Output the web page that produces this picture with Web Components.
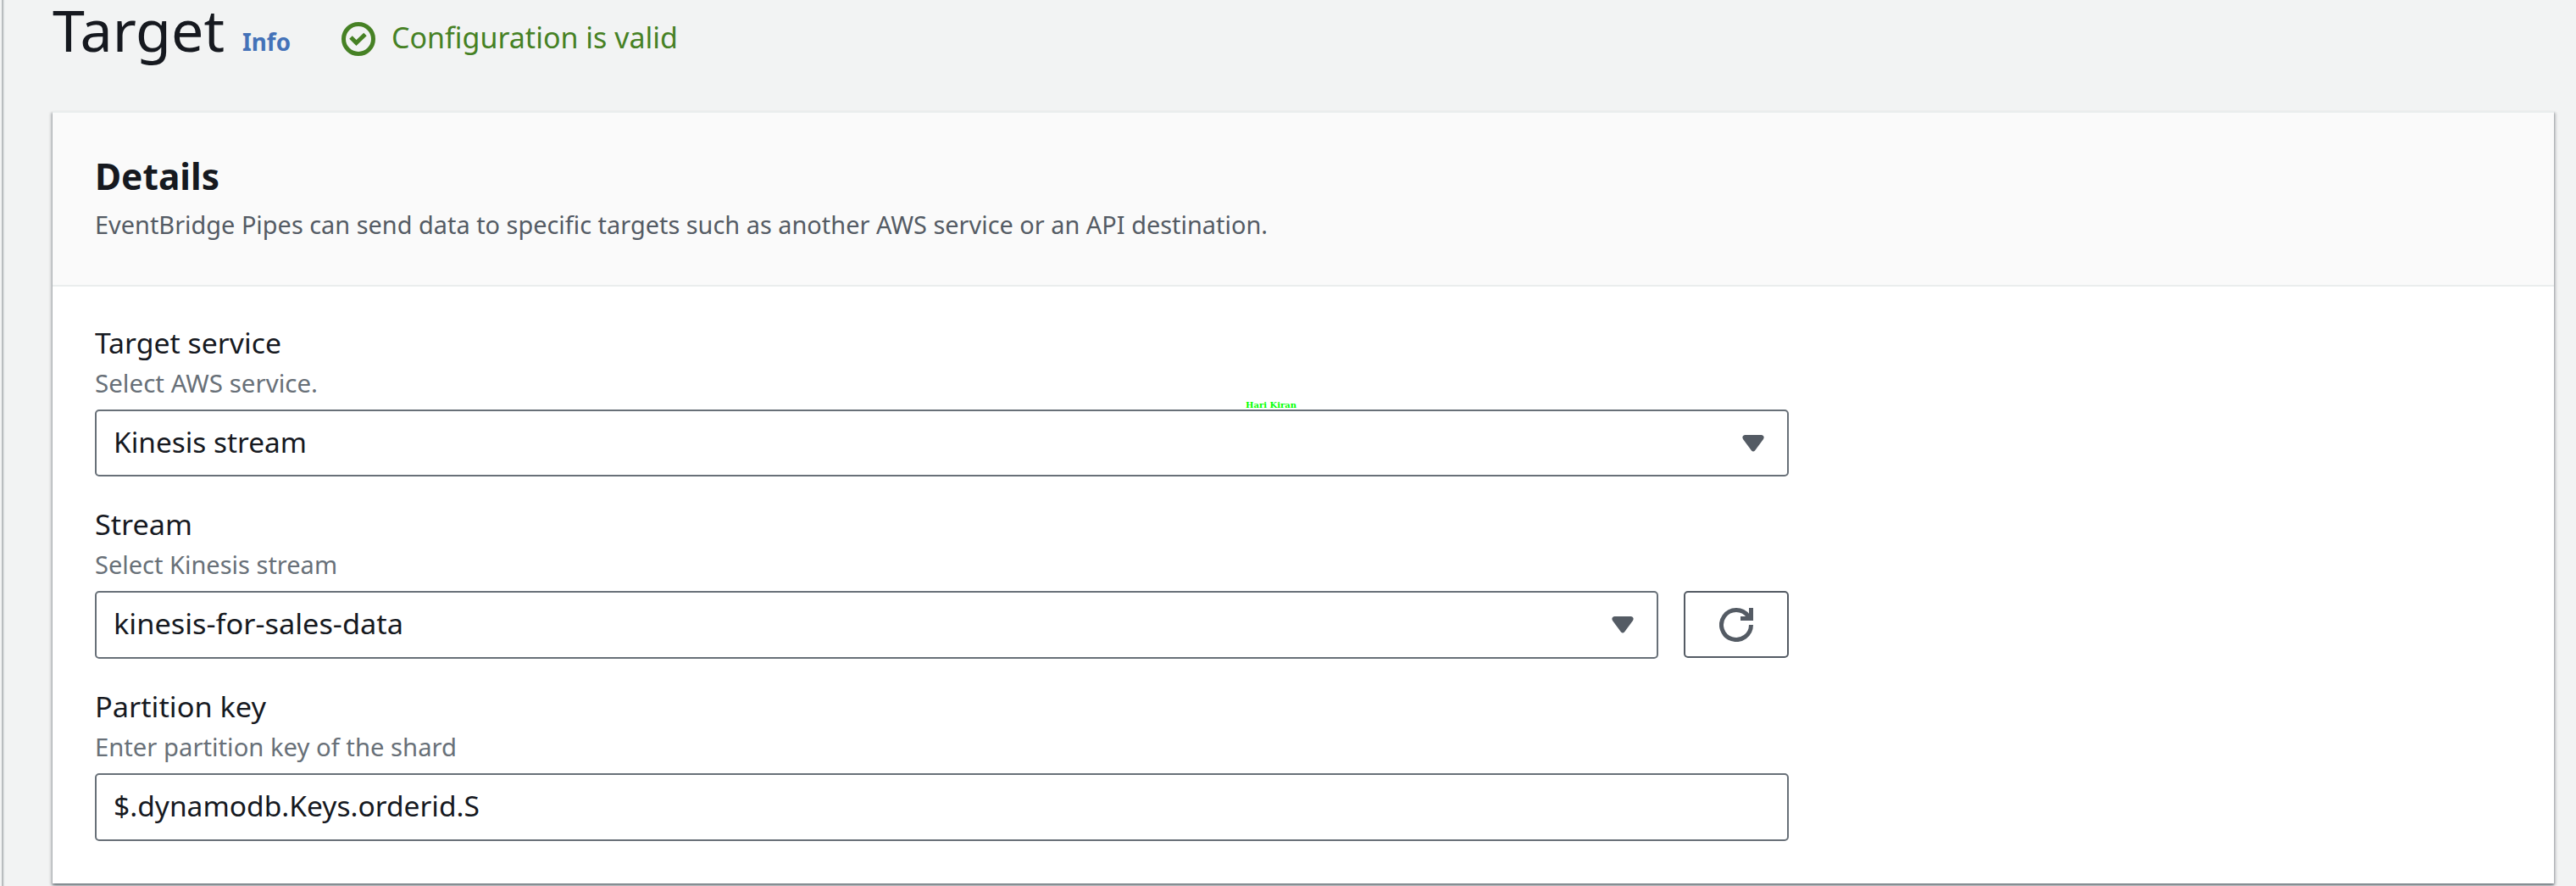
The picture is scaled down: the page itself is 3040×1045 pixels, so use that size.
<!DOCTYPE html>
<html lang="en">
<head>
<meta charset="utf-8">
<title>Target</title>
<style>
html,body{margin:0;height:1045px;overflow:hidden;background:#f2f3f3}
body{font-family:"Noto Sans","Open Sans",sans-serif;color:#16191f}
</style>
</head>
<body>
<pipe-page></pipe-page>
<script>
class FitText extends HTMLElement{
  connectedCallback(){
    const s=this.attachShadow({mode:'open'});
    s.innerHTML=`<style>:host{display:block;white-space:nowrap;width:${this.getAttribute('w')}px}
    span{display:inline-block;transform-origin:0 0}</style><span>${this.getAttribute('text')}</span>`;
    const span=s.querySelector('span');
    span.style.transform=`scaleX(${this.getAttribute('w')/span.getBoundingClientRect().width})`;
  }
}
class StatusIcon extends HTMLElement{
  connectedCallback(){
    this.attachShadow({mode:'open'}).innerHTML=`<style>:host,svg{display:block;width:40px;height:40px}</style>
    <svg viewBox="0 0 40 40" fill="none" stroke="#468124" stroke-width="5"><circle cx="20" cy="20" r="17.5"/><path d="M11 18l6.500 6.500L28 14.500"/></svg>`;
  }
}
class PageHeading extends HTMLElement{
  connectedCallback(){
    this.attachShadow({mode:'open'}).innerHTML=`<style>
    :host{display:flex;height:131px;padding-left:62px;box-sizing:border-box;align-items:flex-start}
    .t{font-size:68px;line-height:72px;margin-top:-1px}
    .i{font-size:29px;line-height:40px;font-weight:700;color:#4472b8;margin:29px 0 0 21px}
    status-icon{margin:26px 0 0 60px}
    .s{font-size:34px;line-height:40px;color:#468124;margin:24px 0 0 19px}</style>
    <fit-text class="t" w="203" text="Target"></fit-text><fit-text class="i" w="57" text="Info"></fit-text>
    <status-icon></status-icon><fit-text class="s" w="338" text="Configuration is valid"></fit-text>`;
  }
}
class DetailsCard extends HTMLElement{
  connectedCallback(){
    this.attachShadow({mode:'open'}).innerHTML=`<style>
    :host{display:block;width:2952px;height:911px;margin-left:62px;background:#fff;box-sizing:border-box;
      border-top:2px solid #eaeded;box-shadow:0 2px 2px 0 rgba(0,28,36,.3),2px 2px 3px 0 rgba(0,7,22,.22),-2px 2px 3px 0 rgba(0,7,22,.22)}
    header{height:205px;box-sizing:border-box;background:#fafafa;border-bottom:2px solid #eaeded;padding:45px 0 0 50px}
    .h{font-size:43px;line-height:60px;font-weight:700}
    .d{font-size:29px;line-height:40px;color:#545b64;margin-top:7px}
    main{display:block;padding:43px 0 0 50px}</style>
    <header><fit-text class="h" w="147" text="Details"></fit-text>
    <fit-text class="d" w="1384" text="EventBridge Pipes can send data to specific targets such as another AWS service or an API destination."></fit-text></header>
    <main><slot></slot></main>`;
  }
}
class FormField extends HTMLElement{
  connectedCallback(){
    const a=n=>this.getAttribute(n);
    this.attachShadow({mode:'open'}).innerHTML=`<style>
    :host{display:block;width:1999px;height:${a('height')}px}
    .l{font-size:33px;line-height:48px}
    .h{font-size:29px;line-height:40px;color:#687078;margin-top:3px}
    .r{display:flex;gap:30px;margin-top:11px}</style>
    <fit-text class="l" w="${a('lw')}" text="${a('label')}"></fit-text>
    <fit-text class="h" w="${a('hw')}" text="${a('hint')}"></fit-text><div class="r"><slot></slot></div>`;
  }
}
class ValueBox extends HTMLElement{
  connectedCallback(){
    const arrow=this.hasAttribute('select')?'<svg width="26" height="20" viewBox="0 0 26 20"><path d="M3 0h20q4 1 2 5L15 18.5q-2 2-4 0L1 5Q-1 1 3 0z" fill="#545b64"/></svg>':'';
    this.attachShadow({mode:'open'}).innerHTML=`<style>
    :host{flex:1;display:flex;position:relative;justify-content:space-between;align-items:center;height:${this.getAttribute('height')||80}px;box-sizing:border-box;border:2px solid #687078;border-radius:5px;padding:0 27px 0 20px;font-size:33px;line-height:48px}
    fit-text{margin-top:-2px}</style>
    <fit-text w="${this.getAttribute('w')}" text="${this.getAttribute('value')}"></fit-text>${arrow}<slot></slot>`;
  }
}
class RefreshButton extends HTMLElement{
  connectedCallback(){
    this.attachShadow({mode:'open'}).innerHTML=`<style>
    :host{display:flex;align-items:center;justify-content:center;width:124px;height:79px;box-sizing:border-box;border:2px solid #545b64;border-radius:5px}</style>
    <svg width="40" height="40" viewBox="0 0 40 40" fill="none" stroke="#545b64" stroke-width="5"><path d="M37.5 20A17.5 17.5 0 1 1 34 9.500L36 12.500M37.500 0V12.500H25"/></svg>`;
  }
}
class AuthorMark extends HTMLElement{
  connectedCallback(){
    this.attachShadow({mode:'open'}).innerHTML=`<style>:host{position:absolute;left:1356px;top:-13px;font:bold 9px/12px "DejaVu Serif",serif;color:#0f0;white-space:nowrap}fit-text{margin:0}</style><fit-text w="60" text="Hari Kiran"></fit-text>`;
  }
}
class PipePage extends HTMLElement{
  connectedCallback(){
    this.attachShadow({mode:'open'}).innerHTML=`<style>:host{display:block;width:3040px;height:1045px;overflow:hidden;box-sizing:border-box;
    background:linear-gradient(90deg,#f2f3f3 0 2px,#b9bdbf 2px 4px,#e3e5e6 4px 5px,#edefef 5px 6px,#f2f3f3 6px)}</style>
    <page-heading></page-heading>
    <details-card>
    <form-field height="214" label="Target service" lw="220" hint="Select AWS service." hw="263"><value-box height="79" select w="228" value="Kinesis stream"><author-mark></author-mark></value-box></form-field>
    <form-field height="215" label="Stream" lw="115" hint="Select Kinesis stream" hw="286"><value-box select w="342" value="kinesis-for-sales-data"></value-box><refresh-button></refresh-button></form-field>
    <form-field height="215" label="Partition key" lw="202" hint="Enter partition key of the shard" hw="427"><value-box w="432" value="$.dynamodb.Keys.orderid.S"></value-box></form-field>
    </details-card>`;
  }
}
customElements.define('fit-text',FitText);
customElements.define('status-icon',StatusIcon);
customElements.define('page-heading',PageHeading);
customElements.define('details-card',DetailsCard);
customElements.define('form-field',FormField);
customElements.define('value-box',ValueBox);
customElements.define('refresh-button',RefreshButton);
customElements.define('author-mark',AuthorMark);
customElements.define('pipe-page',PipePage);
</script>
</body>
</html>
